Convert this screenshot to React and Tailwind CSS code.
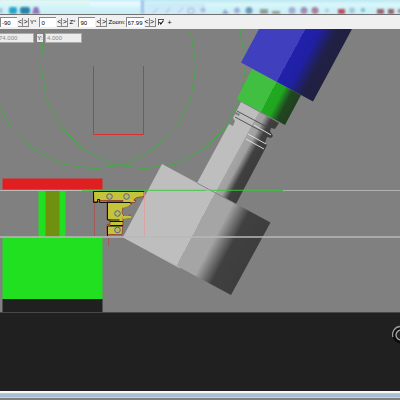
import React, { useState } from 'react';

// Number box with a pair of step buttons after it
const Stepper = ({ label, name, value, onChange, inputClass }) => {
  const step = (amount) => onChange(String(Number((Number(value) + amount).toFixed(2))));

  return (
    <div className="flex items-center">
      {label && <label htmlFor={name} className="shrink-0 whitespace-nowrap">{label}</label>}
      <input
        id={name}
        aria-label={name}
        value={value}
        onChange={(e) => onChange(e.target.value)}
        className={`h-[10px] border-l border-t border-[#888] bg-white pl-px ${inputClass}`}
      />
      <div className="ml-px flex text-[7px]">
        <button onClick={() => step(-1)} aria-label={`${name} down`} className="flex h-[9px] w-[5px] items-center justify-center border-b border-r border-[#888]">&lt;</button>
        <button onClick={() => step(1)} aria-label={`${name} up`} className="flex h-[9px] w-[6px] items-center justify-center border-b border-r border-[#888]">&gt;</button>
      </div>
    </div>
  );
};

// Blurred window frame with the icons of the bar behind it
const GlassFrame = () => (
  <svg viewBox="0 0 400 14" preserveAspectRatio="none" className="block h-[14px] w-full" aria-hidden="true">
    <defs>
      <linearGradient id="glass" x1="0" y1="0" x2="0" y2="1">
        <stop offset="0" stopColor="#bfe9f2" />
        <stop offset="0.3" stopColor="#d7f7fa" />
        <stop offset="1" stopColor="#c8edf5" />
      </linearGradient>
      <filter id="soft" x="-50%" y="-50%" width="200%" height="200%">
        <feGaussianBlur stdDeviation="1" />
      </filter>
    </defs>
    <rect width="400" height="14" fill="url(#glass)" />
    <g filter="url(#soft)">
      <rect x="0" y="0" width="90" height="3" fill="#e8f8ee" />
      <rect x="90" y="1" width="50" height="5" fill="#e4f9ff" />
      <rect x="145" y="3" width="60" height="11" fill="#cdeaf8" />
      <rect x="141" y="0" width="3" height="14" fill="#9cbfe8" />
      <rect x="0" y="8" width="2" height="5" fill="#8ab3d0" />
      <rect x="9" y="7" width="8" height="7" rx="2" fill="#25a5c8" />
      <rect x="20" y="7" width="10" height="7" rx="2" fill="#2583a8" />
      <path d="M32 14l2-7h4l2 7z" fill="#9072b8" />
      <path d="M153 13l5-5M166 13l4-5M178 13l5-5" stroke="#98a9d8" />
      <circle cx="191" cy="11" r="3" fill="none" stroke="#969fda" />
      <circle cx="203" cy="10" r="2.500" fill="#a9b9e2" />
      <path d="M222 14l3-5 4 5z" fill="#8fa3cc" />
      <circle cx="237" cy="10.500" r="3" fill="#a0b0da" />
      <circle cx="249" cy="10.500" r="3.500" fill="#6e98b8" />
      <rect x="260" y="9" width="8" height="5" fill="#8e9f99" />
      <rect x="272" y="11" width="8" height="3" fill="#8f9f98" />
      <circle cx="292" cy="10.500" r="3.500" fill="#a3aed0" />
      <circle cx="304" cy="10.500" r="3.500" fill="#a18bb4" />
      <circle cx="315" cy="10.500" r="3.500" fill="#a8809a" />
      <circle cx="327" cy="10.500" r="2" fill="#b0c6de" />
      <rect x="338" y="9" width="7" height="5" fill="#b9505c" />
      <circle cx="352" cy="10.500" r="3" fill="#a8c5e0" />
      <circle cx="363" cy="10" r="2" fill="#78b8c8" />
      <rect x="377" y="9" width="7" height="5" fill="#99636f" />
      <rect x="388" y="9" width="6" height="5" fill="#99636f" />
      <rect x="398" y="9" width="4" height="4" fill="#a78792" />
    </g>
  </svg>
);

// Clamped workpiece, profile and tilted spindle
const Scene = () => (
  <svg viewBox="0 29 400 283" className="block h-auto w-full" role="img" aria-label="Tool and workpiece">
    <defs>
      <linearGradient id="cutter" gradientUnits="userSpaceOnUse" x1="143" y1="201" x2="251" y2="258">
        <stop offset="0" stopColor="#bebebe" />
        <stop offset="0.49" stopColor="#bebebe" />
        <stop offset="0.49" stopColor="#a5a5a5" />
        <stop offset="0.66" stopColor="#a5a5a5" />
        <stop offset="0.81" stopColor="#404040" />
        <stop offset="1" stopColor="#3d3d3d" />
      </linearGradient>
      <linearGradient id="shank" gradientUnits="userSpaceOnUse" x1="215" y1="151" x2="250" y2="170">
        <stop offset="0" stopColor="#bebebe" />
        <stop offset="0.5" stopColor="#bebebe" />
        <stop offset="0.51" stopColor="#a5a5a5" />
        <stop offset="0.68" stopColor="#a0a0a0" />
        <stop offset="0.86" stopColor="#404040" />
        <stop offset="1" stopColor="#3d3d3d" />
      </linearGradient>
      <linearGradient id="collar" gradientUnits="userSpaceOnUse" x1="237" y1="99" x2="285" y2="124">
        <stop offset="0" stopColor="#40bf40" />
        <stop offset="0.5" stopColor="#40bf40" />
        <stop offset="0.5" stopColor="#20aa20" />
        <stop offset="0.68" stopColor="#20a620" />
        <stop offset="0.84" stopColor="#204820" />
        <stop offset="1" stopColor="#203f20" />
      </linearGradient>
      <linearGradient id="holder" gradientUnits="userSpaceOnUse" x1="241" y1="62" x2="313" y2="101">
        <stop offset="0" stopColor="#4040bf" />
        <stop offset="0.5" stopColor="#4040bf" />
        <stop offset="0.5" stopColor="#2020aa" />
        <stop offset="0.66" stopColor="#2020a6" />
        <stop offset="0.84" stopColor="#202048" />
        <stop offset="1" stopColor="#202040" />
      </linearGradient>
    </defs>
    <rect y="29" width="400" height="283" fill="#808080" />

    {/* swing circles */}
    <g fill="none" stroke="#40ac40" strokeWidth="0.9">
      <path d="M44 29l-3 37 5 32 15 29 22 22 29 15 32 5 32-5 29-16 22-22 14-30 5-32-6-35" />
      <path d="M-6 90l6 18 11 20 22 21 29 15 32 5 32-5 28-15 23-22 14-29 5-32-5-33-3-4" />
    </g>
    <path d="M93.500 66v68.500h50V66" fill="none" stroke="#d83030" />

    {/* clamp */}
    <rect x="2.500" y="178.500" width="100" height="11" fill="#e02020" />
    <rect x="38.500" y="190" width="27" height="47" fill="#20e020" />
    <rect x="45.500" y="190" width="14" height="47" fill="#709010" />
    <path d="M0 190.500h100" stroke="#bababa" />
    <rect x="2.500" y="237" width="100" height="62" fill="#20e020" />
    <rect x="2.500" y="299" width="100" height="13" fill="#202020" />
    <path d="M94.500 203v33M108.500 237v9" stroke="#b04a4a" strokeWidth="0.7" />

    {/* profile section */}
    <path d="M93.500 191.500h50.500v5l-7 1-3 2v1h2l-1 2h-5v1h2l-2 2-7 2-1 5 2 4h4l2-2v3l-2 1-5-1v6l-1 11h-15v-10h3v-5h-3v-18h16v-1h-23v-1h-1v2h-5z" fill="#c4c43c" stroke="#932b22" strokeWidth="0.7" />
    <path d="M123 203h7l-1 3-6 2zM123 216h8v2l-8 1z" fill="#c4c43c" />
    <path d="M144 191.500h-50.500v11h4v-3h2v3h31M107.500 203v17h12M110 221.500h13M110 225.500h13M107.500 236v-10h15" fill="none" stroke="#111" />
    <g fill="#b8b86a" stroke="#555580" strokeWidth="0.9">
      <circle cx="109.500" cy="196.500" r="2.800" />
      <circle cx="126.500" cy="196.500" r="2.800" />
      <circle cx="117.500" cy="213.500" r="2.800" />
      <circle cx="117.500" cy="230" r="2.800" />
    </g>

    {/* spindle, top to bottom */}
    <path d="M259 29h93l-39 72.500-72-39z" fill="url(#holder)" />
    <path d="M252 69l49 26-16 30-48-26z" fill="url(#collar)" />
    <path d="M241 102l38 21-4 6-4-1-1 3 3 5-2 2-4-1-2 6 2 2-3 6-28 53-39-21 32-59 4 2 2-5-2-3 2-4 4 2 1-2-4-2z" fill="url(#shank)" />
    <g fill="none" strokeWidth="0.9">
      <path d="M237 111l32 17M235 117l26 14" stroke="#484848" />
      <path d="M254 125l17 10M248 134l18 10M246 139l18 10" stroke="#e8e8e8" />
    </g>
    <path d="M162 164l108.500 58.500L231 295l-108-58z" fill="url(#cutter)" />
    <path d="M197 183l39 21" stroke="#777" strokeWidth="0.7" />
    <path d="M123 237l57 31" stroke="#cfcfcf" strokeWidth="0.7" />
    <path d="M144.500 192v44" stroke="#e89a9a" strokeWidth="0.7" />

    {/* reference levels */}
    <path d="M82 190.300h201" stroke="#38c838" strokeWidth="0.9" />
    <path d="M206 190.300h4M283 190.500h117" stroke="#b8b8b8" strokeWidth="0.9" />
    <path d="M0 237h400" stroke="#b8b8b8" strokeWidth="1.300" />
  </svg>
);

const App = () => {
  const [angles, setAngles] = useState({ x: '-90', y: '0', z: '90' });
  const [zoom, setZoom] = useState('67.99');
  const [locked, setLocked] = useState(true);
  const setAngle = (axis) => (value) => setAngles({ ...angles, [axis]: value });

  return (
    <div className="flex min-h-screen flex-col overflow-hidden bg-[#202020] font-['Liberation_Sans',sans-serif] text-[6px] leading-none text-black">
      <GlassFrame />

      <div className="flex h-[15px] items-center gap-px border-t border-[#707070] bg-[#f0f0f0]">
        <Stepper name="X" value={angles.x} onChange={setAngle('x')} inputClass="w-[17px]" />
        <Stepper name="Y" label="Y°" value={angles.y} onChange={setAngle('y')} inputClass="ml-[3px] w-[17px]" />
        <Stepper name="Z" label="Z°" value={angles.z} onChange={setAngle('z')} inputClass="ml-[3px] w-[17px]" />
        <Stepper name="Zoom" label="Zoom:" value={zoom} onChange={setZoom} inputClass="w-[18px]" />
        <label className="ml-px flex items-center gap-1 text-[7px]">
          <span className="relative flex">
            <input
              type="checkbox"
              checked={locked}
              onChange={(e) => setLocked(e.target.checked)}
              className="peer h-[6px] w-[6px] appearance-none border-l border-t border-[#555] bg-white"
            />
            <svg viewBox="0 0 6 6" className="pointer-events-none absolute inset-0 hidden peer-checked:block" aria-hidden="true">
              <path d="M1.500 3l1.300 2L5.500 1.500" fill="none" stroke="#111" strokeWidth="1.200" />
            </svg>
          </span>
          +
        </label>
      </div>

      <main className="relative">
        <Scene />
        <div className="absolute left-0 top-1 flex items-center text-[#888]">
          <input aria-label="Position X" readOnly value="74.000" className="-ml-[2px] h-[10px] w-[36px] border border-[#aaa] bg-[#ececec]" />
          <label htmlFor="posY" className="ml-[3px] mr-[2px] flex h-[8px] w-[6px] items-center justify-center bg-[#e8e8e8] text-[#333]">Y:</label>
          <input id="posY" readOnly value="4.000" className="h-[10px] w-[37px] border border-[#aaa] bg-[#ececec] pl-px" />
        </div>
      </main>

      <div className="flex flex-1 items-start justify-end overflow-hidden border-t border-[#484848] pt-[10px]">
        {/* dial, partly outside the window */}
        <svg viewBox="0 0 8 24" className="h-6 w-2" aria-hidden="true">
          <circle cx="9" cy="12" r="8.500" fill="#0c0c0c" />
          <path d="M1 14A8 8 0 0 1 8 3.500" fill="none" stroke="#999" strokeWidth="1.300" />
          <circle cx="9" cy="12" r="5" fill="#222" stroke="#aaa" strokeWidth="1.300" />
        </svg>
      </div>

      <footer>
        <div className="h-[2px] bg-[#f8f8f4]" />
        <div className="h-px bg-[#c5c7bd]" />
        <div className="h-[3px] bg-[#a9bfd5]" />
        <div className="h-px bg-[#b9d5e8]" />
        <div className="h-[2px] bg-[#808080]" />
      </footer>
    </div>
  );
};

export default App;
